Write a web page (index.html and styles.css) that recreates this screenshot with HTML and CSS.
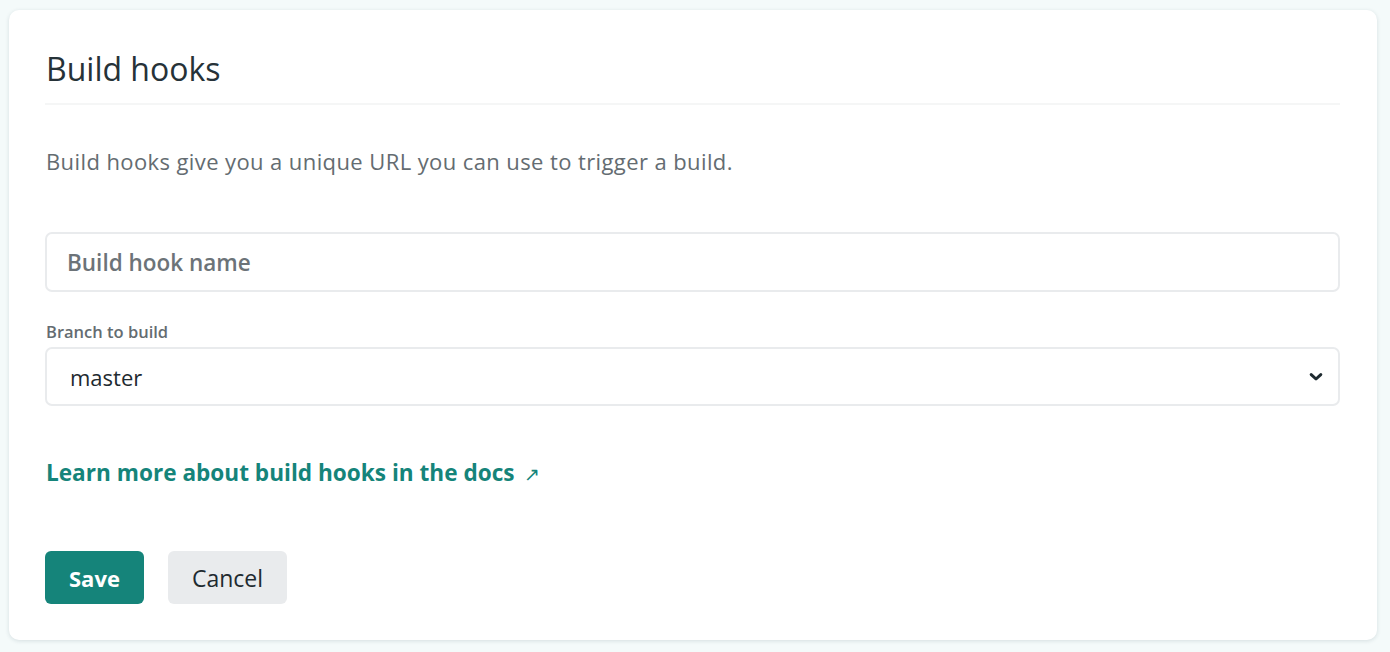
FILE: index.html
```html
<!DOCTYPE html>
<html>
<head>
<meta charset="utf-8">
<link rel="stylesheet" href="styles.css">
</head>
<body>
<div class="card">
  <h2 class="title">Build hooks</h2>
  <p class="desc">Build hooks give you a unique URL you can use to trigger a build.</p>
  <div class="field">
    <input class="input" type="text" placeholder="Build hook name">
  </div>
  <div class="field">
    <label class="label">Branch to build</label>
    <div class="select">
      <span class="select-value">master</span>
      <svg class="chev" width="14" height="10" viewBox="0 0 14 10"><path d="M2.2 2.6 L7 7 L11.8 2.6" fill="none" stroke="#1e2a30" stroke-width="3" stroke-linecap="round" stroke-linejoin="round"/></svg>
    </div>
  </div>
  <a class="doc-link" href="#">Learn more about build hooks in the docs <span class="arrow">↗</span></a>
  <div class="actions">
    <button class="btn btn-primary">Save</button>
    <button class="btn btn-secondary">Cancel</button>
  </div>
</div>
</body>
</html>
```
FILE: styles.css
```css
html, body {
  margin: 0;
  padding: 0;
}
body {
  background: #f4fafa;
  font-family: "Open Sans", "Noto Sans", sans-serif;
  color: #2e3a40;
}
.card {
  box-sizing: border-box;
  margin: 10px 13px 12px 9px;
  height: 630px;
  background: #ffffff;
  border-radius: 10px;
  box-shadow: 0 1px 4px rgba(30, 60, 70, 0.14);
  padding: 1px 37px 0 36px;
}
.title {
  margin: 38px 0 0 0;
  padding-left: 1px;
  font-size: 32px;
  font-weight: 400;
  line-height: 40px;
  color: #263238;
  padding-bottom: 14px;
  border-bottom: 2px solid #f5f6f6;
}
.desc {
  margin: 41px 0 0 1px;
  font-size: 22px;
  letter-spacing: 0.4px;
  line-height: 30px;
  color: #646c71;
}
.field {
  margin-top: 56px;
}
.field + .field {
  margin-top: 29px;
}
.input {
  box-sizing: border-box;
  width: 100%;
  height: 60px;
  border: 2px solid #e9ebed;
  border-radius: 7px;
  padding: 0 20px;
  font-family: inherit;
  font-size: 22.5px;
  font-weight: 600;
  color: #2e3a40;
  outline: none;
  display: block;
}
.input::placeholder {
  color: #6c7378;
  opacity: 1;
}
.label {
  display: block;
  margin-left: 1px;
  font-size: 16.5px;
  font-weight: 600;
  color: #646c71;
  line-height: 22px;
  margin-bottom: 4px;
}
.select {
  box-sizing: border-box;
  height: 59px;
  border: 2px solid #e9ebed;
  border-radius: 7px;
  display: flex;
  align-items: center;
  justify-content: space-between;
  padding: 0 15px 0 23px;
}
.select-value {
  font-size: 22px;
  font-weight: 500;
  color: #1e2a30;
}
.chev {
  display: block;
}
.doc-link {
  display: block;
  width: fit-content;
  margin: 52px 0 0 1px;
  font-size: 22.6px;
  font-weight: 700;
  color: #15847a;
  text-decoration: none;
  line-height: 30px;
}
.arrow {
  font-weight: 400;
  font-size: 19px;
  margin-left: 4px;
}
.actions {
  display: flex;
  gap: 24px;
  margin-top: 62px;
}
.btn {
  height: 53px;
  border: none;
  border-radius: 6px;
  font-family: inherit;
  font-size: 22px;
  padding: 0 24px;
  cursor: pointer;
}
.btn-primary {
  background: #15847a;
  color: #ffffff;
  font-weight: 700;
  padding: 0 24px;
}
.btn-secondary {
  background: #e9ebed;
  color: #1e2a30;
  font-weight: 500;
  font-size: 23px;
  padding: 0 24px;
}
```
